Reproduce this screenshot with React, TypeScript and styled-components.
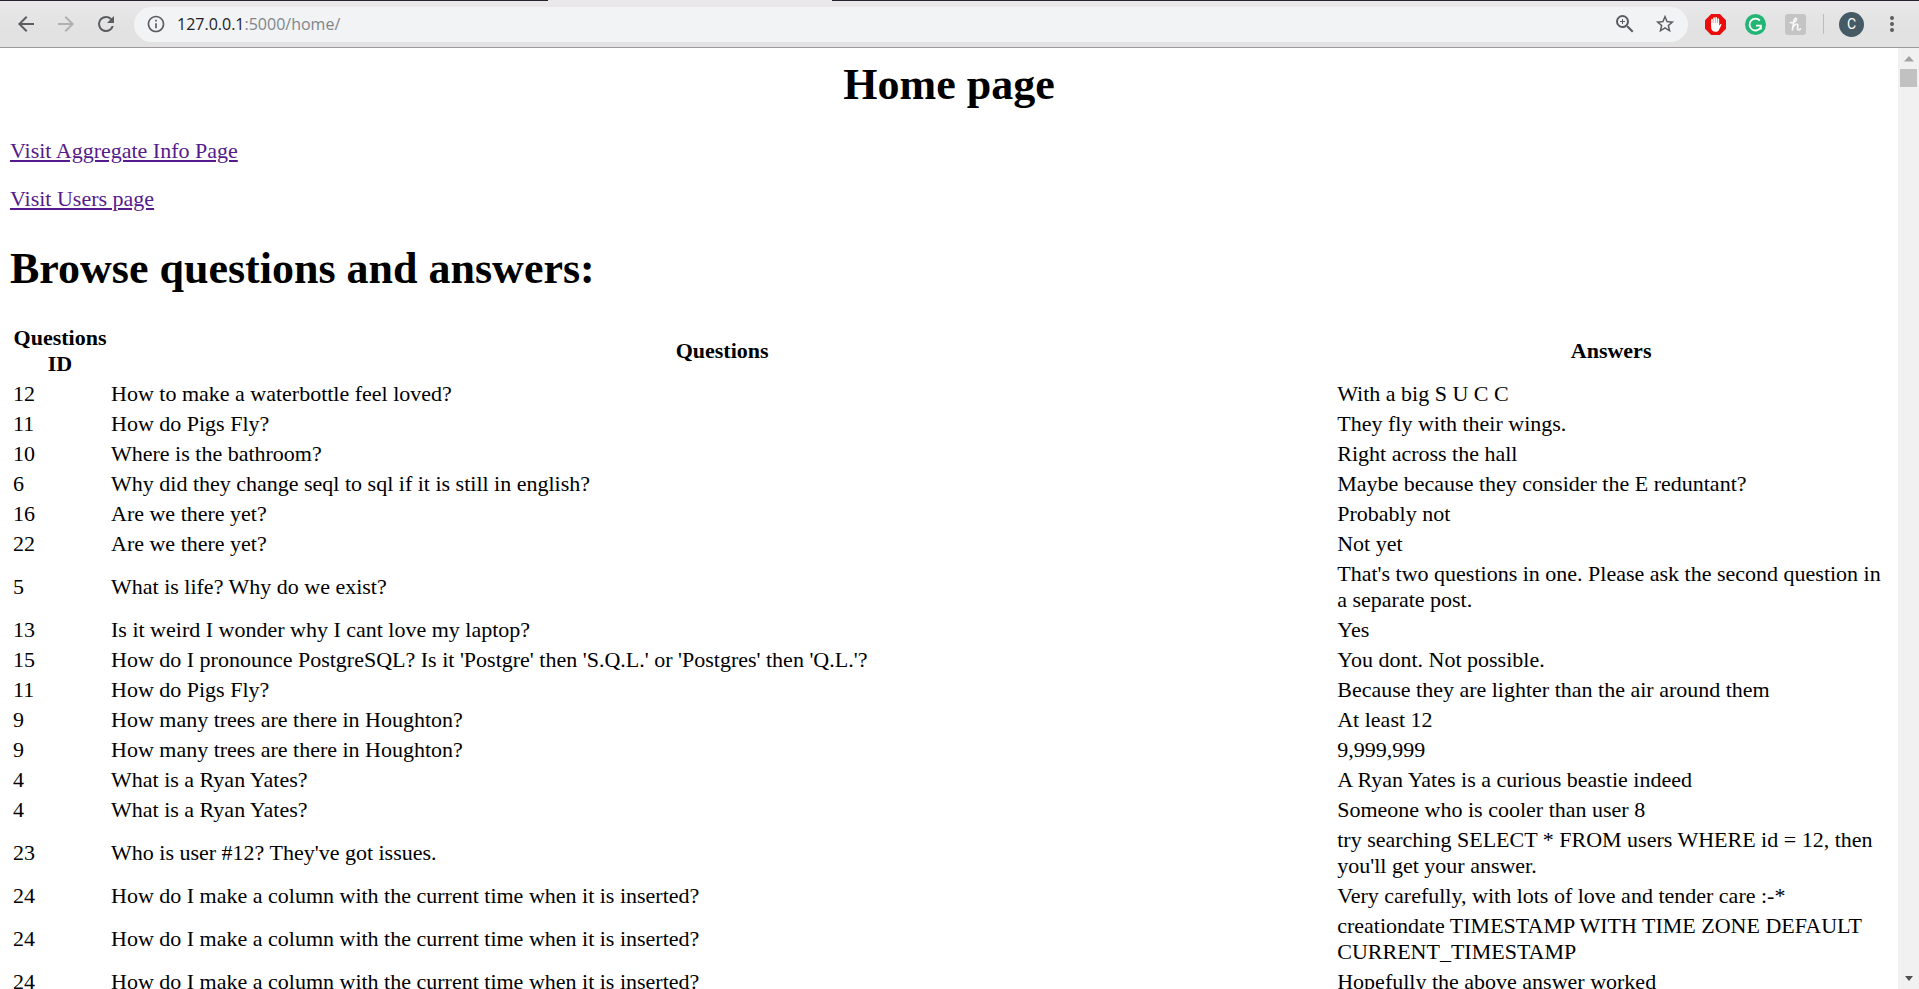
import React from "react";
import styled, { createGlobalStyle } from "styled-components";

const GlobalStyle = createGlobalStyle`
  * { box-sizing: border-box; }
  body { margin: 0; background: #fff; color: #000; }
`;

const Browser = styled.div`
  display: flex;
  flex-direction: column;
  height: 100vh;
  overflow: hidden;
`;

const TabEdge = styled.div`
  flex: none;
  display: flex;
  height: 1px;
  background: #23232d;
`;

const ActiveTab = styled.div`
  width: 284px;
  margin-left: 548px;
  background: #e8e8e8;
`;

const Toolbar = styled.header`
  flex: none;
  display: flex;
  align-items: center;
  height: 47px;
  padding: 0 15px 0 14px;
  background: linear-gradient(#eae8ea, #e2e2e2 60%);
  border-bottom: 1px solid #9c9a9c;
`;

const NavGroup = styled.nav`
  display: flex;
  gap: 16px;
  margin-right: 16px;
`;

const IconButton = styled.button<{ $color?: string }>`
  display: flex;
  align-items: center;
  justify-content: center;
  width: 24px;
  height: 24px;
  padding: 0;
  border: 0;
  background: none;
  color: ${(p) => p.$color ?? "#5a5c5f"};
`;

const AddressBar = styled.div`
  flex: 1;
  display: flex;
  align-items: center;
  height: 35px;
  padding: 0 11px 0 10px;
  border-radius: 18px;
  background: #f1f3f4;
`;

const Url = styled.div`
  flex: 1;
  margin-left: 9px;
  font: 16px/24px "Open Sans", "Noto Sans", sans-serif;
  color: #202124;
`;

const UrlRest = styled.span`
  color: #80868b;
`;

const BarActions = styled.div`
  display: flex;
  gap: 16px;
`;

const Extensions = styled.div`
  display: flex;
  align-items: center;
  gap: 16px;
  margin-left: 15px;
`;

const Divider = styled.div`
  width: 1px;
  height: 20px;
  margin: 0 15px 0 16px;
  background: #bcbcbc;
`;

const Avatar = styled.button`
  width: 25px;
  height: 25px;
  margin-right: 16px;
  padding: 0;
  border: 0;
  border-radius: 50%;
  background: #455a64;
  color: #fff;
  font: 14px/25px Roboto, sans-serif;
  text-align: center;
`;

const Viewport = styled.div`
  flex: 1;
  min-height: 0;
  display: flex;
`;

const Page = styled.main`
  flex: 1;
  min-width: 0;
  overflow: hidden;
  padding: 11px 10px 0;
  font: 22px/26px "Liberation Serif", "Times New Roman", serif;
`;

const Heading = styled.h1<{ $centered?: boolean }>`
  margin: 0 0 27px;
  font-size: 44px;
  line-height: 52px;
  text-align: ${(p) => (p.$centered ? "center" : "left")};
`;

const Paragraph = styled.p`
  margin: 0 0 22px;

  &:last-of-type { margin-bottom: 31px; }
`;

const VisitedLink = styled.a`
  color: #551a8b;
  text-decoration: underline;
`;

const Table = styled.table`
  width: 100%;
  table-layout: fixed;
  border-collapse: separate;
  border-spacing: 2px;

  th, td { padding: 1px; }
`;

const IdCol = styled.col`
  width: 96px;
`;

const AnswerCol = styled.col`
  width: 29.4%;
`;

const Scrollbar = styled.div`
  flex: none;
  display: flex;
  flex-direction: column;
  align-items: center;
  width: 21px;
  background: #f1f1f1;
`;

const ScrollArrow = styled.div<{ $down?: boolean }>`
  display: flex;
  align-items: center;
  justify-content: center;
  width: 21px;
  height: 21px;
  margin-top: ${(p) => (p.$down ? "auto" : "0")};
  color: ${(p) => (p.$down ? "#505050" : "#a3a3a3")};
`;

const ScrollThumb = styled.div`
  width: 17px;
  height: 18px;
  background: #c1c1c1;
`;

const Icon = ({ d, size = 24 }: { d: string; size?: number }) => (
  <svg width={size} height={size} viewBox="0 0 24 24" fill="currentColor" aria-hidden="true">
    <path d={d} />
  </svg>
);

const icons = {
  back: "M20 11H7.83l5.59-5.59L12 4l-8 8 8 8 1.41-1.41L7.83 13H20v-2z",
  forward: "M12 4l-1.41 1.41L16.17 11H4v2h12.17l-5.58 5.59L12 20l8-8z",
  reload:
    "M17.65 6.35A7.96 7.96 0 0 0 12 4a8 8 0 1 0 7.73 10h-2.08A6 6 0 1 1 12 6c1.66 0 3.14.69 4.22 1.78L13 11h7V4l-2.35 2.35z",
  info: "M11 17h2v-6h-2v6zm1-15C6.48 2 2 6.48 2 12s4.48 10 10 10 10-4.480 10-10S17.520 2 12 2zm0 18c-4.410 0-8-3.590-8-8s3.590-8 8-8 8 3.590 8 8-3.590 8-8 8zM11 9h2V7h-2v2z",
  zoom: "M15.500 14h-.79l-.28-.27A6.470 6.470 0 0 0 16 9.500 6.500 6.500 0 1 0 9.500 16c1.610 0 3.090-.59 4.230-1.570l.27.28v.79l5 4.990L20.490 19l-4.990-5zm-6 0C7.010 14 5 11.990 5 9.500S7.010 5 9.500 5 14 7.010 14 9.500 11.990 14 9.500 14zm2.500-4h-2v2H9v-2H7V9h2V7h1v2h2v1z",
  star: "M22 9.240l-7.190-.62L12 2 9.190 8.630 2 9.240l5.460 4.730L5.820 21 12 17.270 18.180 21l-1.630-7.030L22 9.240zM12 15.400l-3.760 2.270 1-4.280-3.320-2.880 4.380-.38L12 6.100l1.710 4.040 4.380.38-3.320 2.880 1 4.280L12 15.400z",
  more: "M12 8a2 2 0 1 0 0-4 2 2 0 0 0 0 4zm0 2a2 2 0 1 0 0 4 2 2 0 0 0 0-4zm0 6a2 2 0 1 0 0 4 2 2 0 0 0 0-4z",
};

const BlockerLogo = () => (
  <svg width="21" height="21" viewBox="0 0 21 21" aria-hidden="true">
    <path d="M6.200 0h8.600L21 6.200v8.600L14.800 21H6.200L0 14.800V6.200z" fill="#eb0c0c" />
    <path d="M7 11V5.600M9.100 10V4.200M11.200 10V3.900M13.300 11V5.200" stroke="#fff" strokeWidth="1.700" strokeLinecap="round" />
    <path d="M6.150 9h8v2.800l1.200-1.500c.6-.6 1.400-.1 1 .7l-2.300 4.800c-.7 1.500-1.700 2-3.400 2-3 0-4.500-1.700-4.500-4.500z" fill="#fff" />
  </svg>
);

const WritingLogo = () => (
  <svg width="21" height="21" viewBox="0 0 21 21" aria-hidden="true">
    <circle cx="10.500" cy="10.500" r="10.500" fill="#22b573" />
    <g fill="none" stroke="#fff" strokeWidth="1.800">
      <path d="M14.900 6.700A5.900 5.900 0 1 0 15.600 13.500" />
      <path d="M11 11.600h4.900v4" />
    </g>
  </svg>
);

const CouponLogo = () => (
  <svg width="21" height="21" viewBox="0 0 21 21" aria-hidden="true">
    <rect width="21" height="21" rx="3" fill="#c4c4c4" />
    <g fill="none" stroke="#f6f6f6" strokeWidth="1.700" strokeLinecap="round" strokeLinejoin="round">
      <path d="M5.500 8.600C8.500 9 11.500 7.400 11.500 5.300c0-1.500-2.200-1.200-2.500 1L7.400 16" />
      <path d="M7.900 13c.8-2 4.900-4.300 4.900-1.500 0 1.500-1 4.500.6 4.500.8 0 1.500-.5 2-1.200" />
    </g>
  </svg>
);

const Triangle = ({ d }: { d: string }) => (
  <svg width="10" height="6" viewBox="0 0 10 6" fill="currentColor" aria-hidden="true">
    <path d={d} />
  </svg>
);

type Entry = [id: number, question: string, answer: string];

const entries: Entry[] = [
  [12, "How to make a waterbottle feel loved?", "With a big S U C C"],
  [11, "How do Pigs Fly?", "They fly with their wings."],
  [10, "Where is the bathroom?", "Right across the hall"],
  [6, "Why did they change seql to sql if it is still in english?", "Maybe because they consider the E reduntant?"],
  [16, "Are we there yet?", "Probably not"],
  [22, "Are we there yet?", "Not yet"],
  [5, "What is life? Why do we exist?", "That's two questions in one. Please ask the second question in a separate post."],
  [13, "Is it weird I wonder why I cant love my laptop?", "Yes"],
  [15, "How do I pronounce PostgreSQL? Is it 'Postgre' then 'S.Q.L.' or 'Postgres' then 'Q.L.'?", "You dont. Not possible."],
  [11, "How do Pigs Fly?", "Because they are lighter than the air around them"],
  [9, "How many trees are there in Houghton?", "At least 12"],
  [9, "How many trees are there in Houghton?", "9,999,999"],
  [4, "What is a Ryan Yates?", "A Ryan Yates is a curious beastie indeed"],
  [4, "What is a Ryan Yates?", "Someone who is cooler than user 8"],
  [23, "Who is user #12? They've got issues.", "try searching SELECT * FROM users WHERE id = 12, then you'll get your answer."],
  [24, "How do I make a column with the current time when it is inserted?", "Very carefully, with lots of love and tender care :-*"],
  [24, "How do I make a column with the current time when it is inserted?", "creationdate TIMESTAMP WITH TIME ZONE DEFAULT CURRENT_TIMESTAMP"],
  [24, "How do I make a column with the current time when it is inserted?", "Hopefully the above answer worked"],
];

export default function App() {
  return (
    <Browser>
      <GlobalStyle />
      <TabEdge>
        <ActiveTab />
      </TabEdge>
      <Toolbar>
        <NavGroup>
          <IconButton aria-label="Back"><Icon d={icons.back} /></IconButton>
          <IconButton aria-label="Forward" $color="#b0b0b1"><Icon d={icons.forward} /></IconButton>
          <IconButton aria-label="Reload"><Icon d={icons.reload} /></IconButton>
        </NavGroup>
        <AddressBar>
          <IconButton aria-label="Site information"><Icon d={icons.info} size={20} /></IconButton>
          <Url>
            127.0.0.1<UrlRest>:5000/home/</UrlRest>
          </Url>
          <BarActions>
            <IconButton aria-label="Zoom"><Icon d={icons.zoom} size={24} /></IconButton>
            <IconButton aria-label="Bookmark this page"><Icon d={icons.star} size={22} /></IconButton>
          </BarActions>
        </AddressBar>
        <Extensions>
          <IconButton aria-label="Ad blocker"><BlockerLogo /></IconButton>
          <IconButton aria-label="Writing assistant"><WritingLogo /></IconButton>
          <IconButton aria-label="Coupons"><CouponLogo /></IconButton>
        </Extensions>
        <Divider />
        <Avatar aria-label="Profile">C</Avatar>
        <IconButton aria-label="Menu"><Icon d={icons.more} /></IconButton>
      </Toolbar>
      <Viewport>
        <Page>
          <Heading $centered>Home page</Heading>
          <Paragraph><VisitedLink href="#aggregate">Visit Aggregate Info Page</VisitedLink></Paragraph>
          <Paragraph><VisitedLink href="#users">Visit Users page</VisitedLink></Paragraph>
          <Heading>Browse questions and answers:</Heading>
          <Table>
            <colgroup>
              <IdCol />
              <col />
              <AnswerCol />
            </colgroup>
            <thead>
              <tr>
                <th scope="col">Questions ID</th>
                <th scope="col">Questions</th>
                <th scope="col">Answers</th>
              </tr>
            </thead>
            <tbody>
              {entries.map(([id, question, answer], i) => (
                <tr key={i}>
                  <td>{id}</td>
                  <td>{question}</td>
                  <td>{answer}</td>
                </tr>
              ))}
            </tbody>
          </Table>
        </Page>
        <Scrollbar aria-hidden="true">
          <ScrollArrow><Triangle d="M0 5.500h10L5 0z" /></ScrollArrow>
          <ScrollThumb />
          <ScrollArrow $down><Triangle d="M1 0h8L5 5z" /></ScrollArrow>
        </Scrollbar>
      </Viewport>
    </Browser>
  );
}
